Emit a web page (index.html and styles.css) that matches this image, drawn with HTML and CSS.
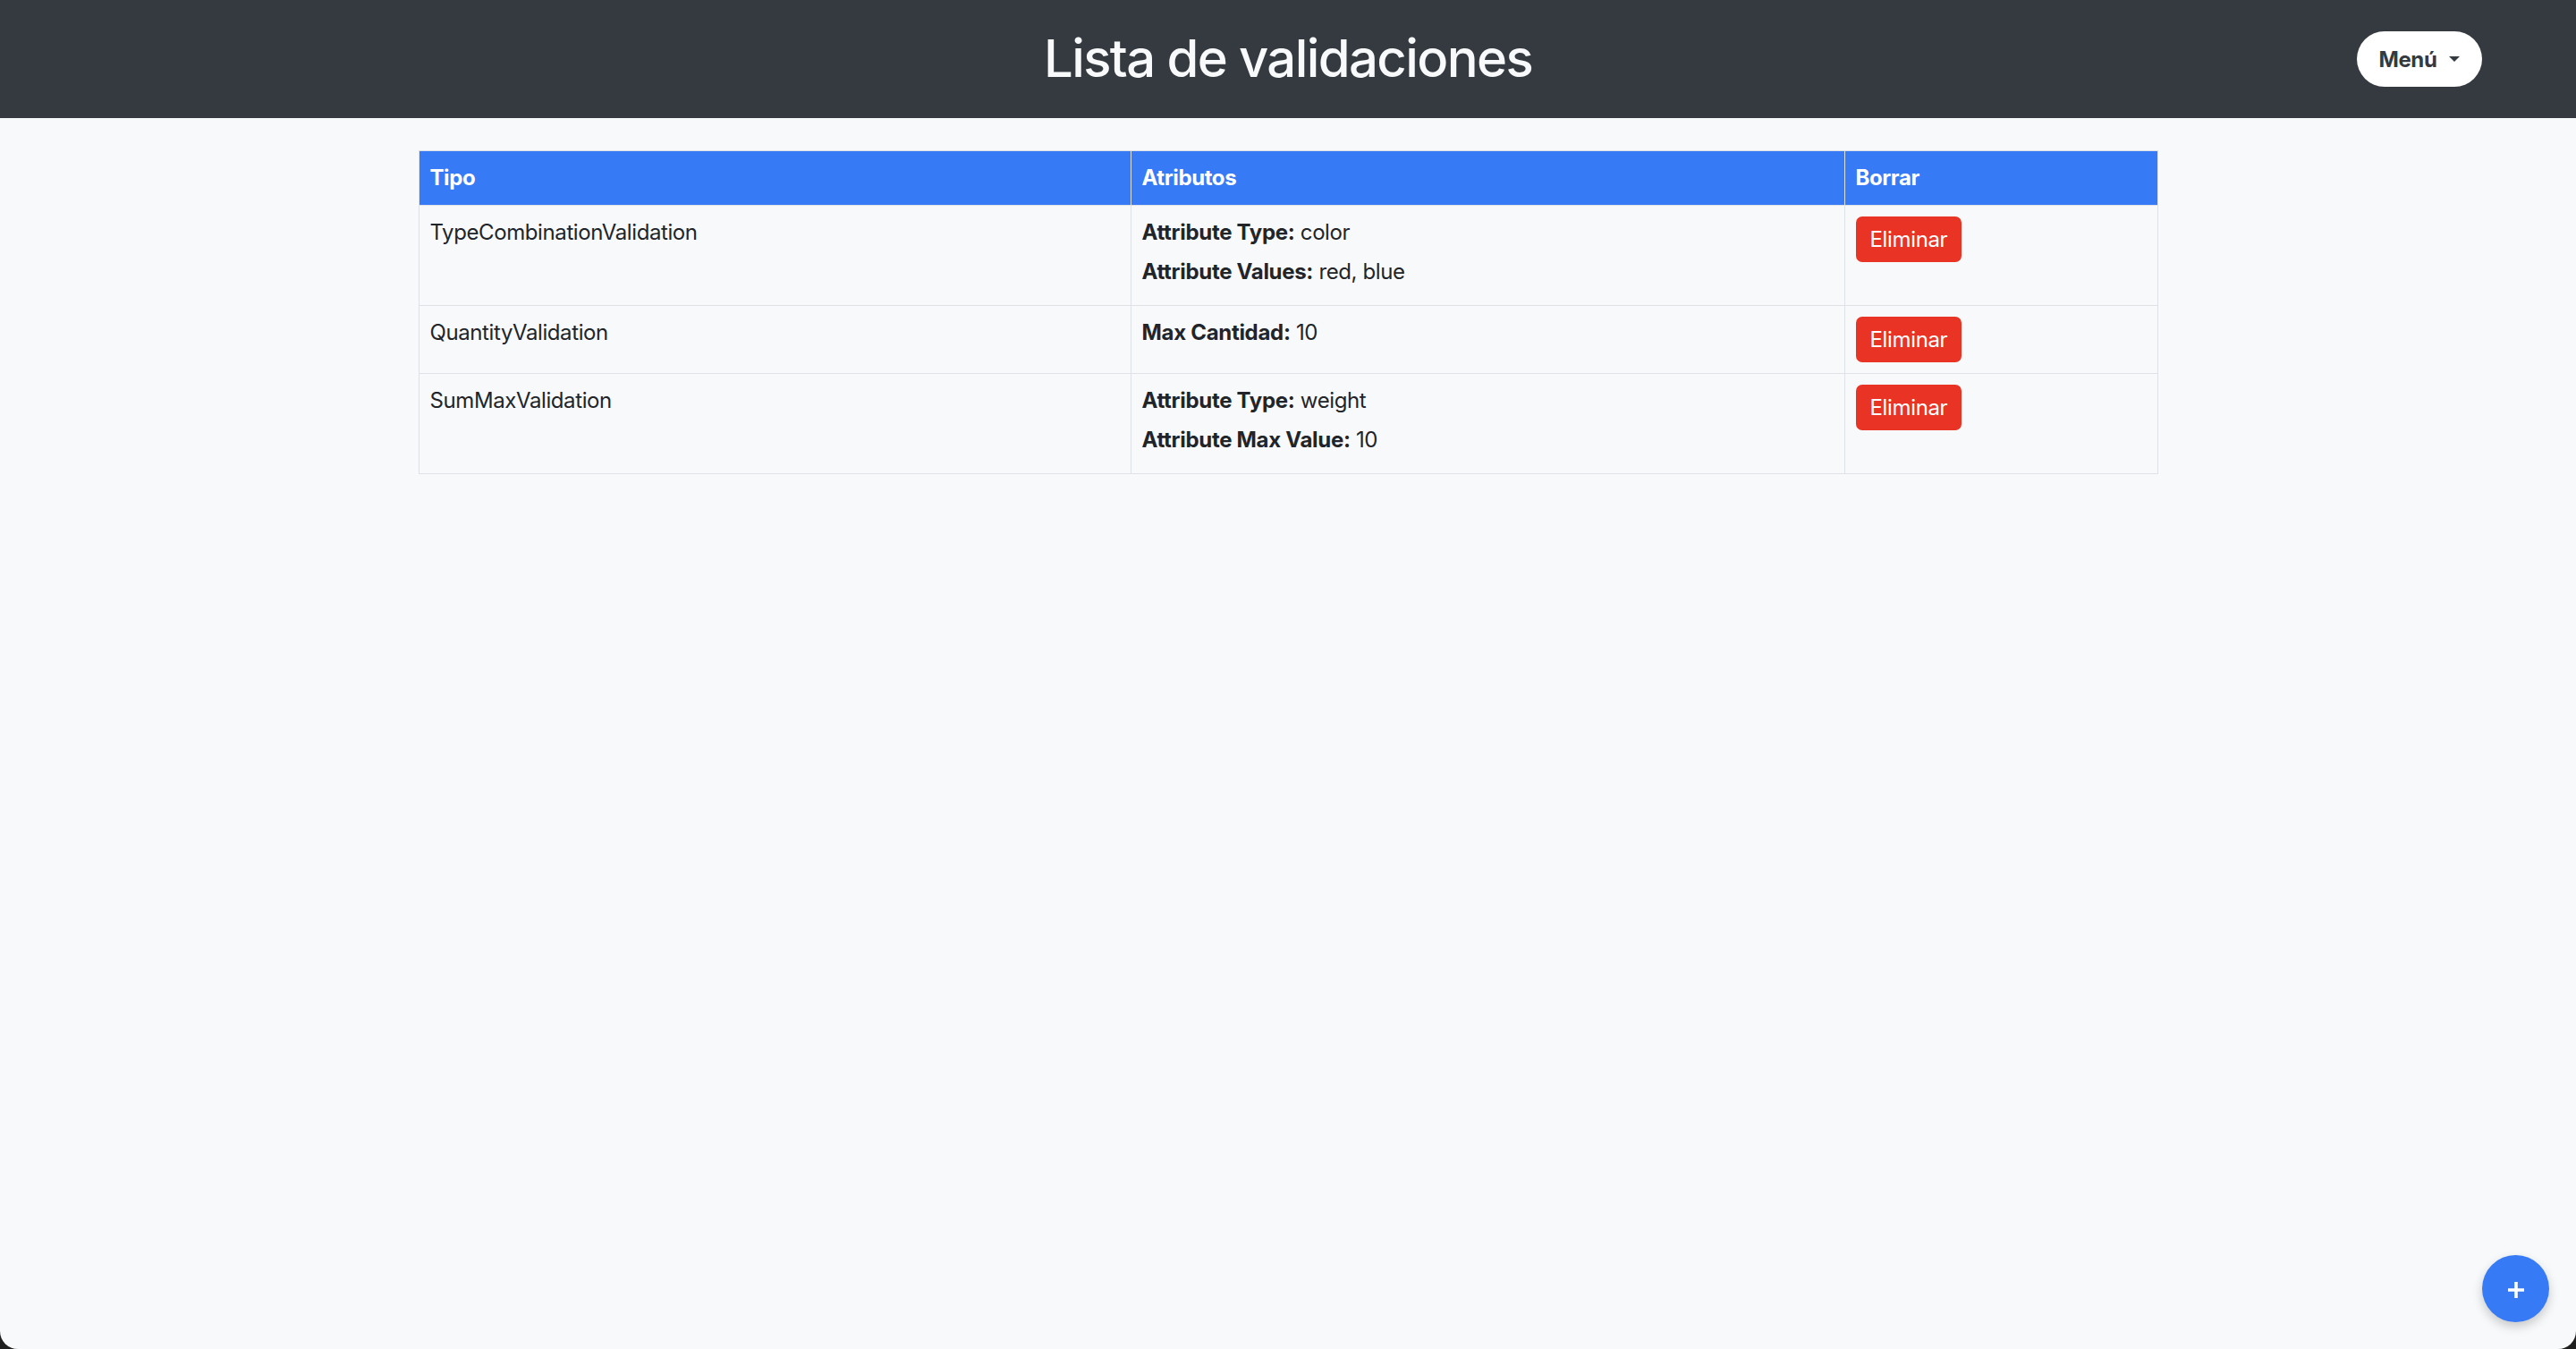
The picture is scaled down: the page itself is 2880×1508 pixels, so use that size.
FILE: index.html
```html
<!DOCTYPE html>
<html lang="es">
<head>
<meta charset="utf-8">
<title>Lista de validaciones</title>
<link rel="stylesheet" href="styles.css">
</head>
<body>
<div class="page">
  <header class="topbar">
    <div class="spacer"></div>
    <h1 class="title">Lista de validaciones</h1>
    <div class="menu-wrap">
      <button class="menu-btn" type="button">Menú <span class="caret"></span></button>
    </div>
  </header>

  <main class="content">
    <table class="vtable">
      <colgroup>
        <col class="c-tipo">
        <col class="c-attr">
        <col class="c-del">
      </colgroup>
      <thead>
        <tr>
          <th>Tipo</th>
          <th>Atributos</th>
          <th>Borrar</th>
        </tr>
      </thead>
      <tbody>
        <tr>
          <td>TypeCombinationValidation</td>
          <td>
            <p><strong>Attribute Type:</strong> color</p>
            <p><strong>Attribute Values:</strong> red, blue</p>
          </td>
          <td><button class="btn-del" type="button">Eliminar</button></td>
        </tr>
        <tr>
          <td>QuantityValidation</td>
          <td>
            <p><strong>Max Cantidad:</strong> 10</p>
          </td>
          <td><button class="btn-del" type="button">Eliminar</button></td>
        </tr>
        <tr>
          <td>SumMaxValidation</td>
          <td>
            <p><strong>Attribute Type:</strong> weight</p>
            <p><strong>Attribute Max Value:</strong> 10</p>
          </td>
          <td><button class="btn-del" type="button">Eliminar</button></td>
        </tr>
      </tbody>
    </table>
  </main>

  <button class="fab" type="button" aria-label="Añadir">
    <svg width="20" height="20" viewBox="0 0 20 20"><path d="M10 1v18M1 10h18" stroke="#fff" stroke-width="3.6" stroke-linecap="butt"/></svg>
  </button>
</div>
</body>
</html>
```

FILE: styles.css
```css
html {
  background: #1f1f1f;
}

body {
  margin: 0;
  font-family: Inter, "Noto Sans", "Liberation Sans", sans-serif;
  color: #212529;
  font-size: 24px;
  line-height: 36px;
}

.page {
  min-height: 1508px;
  background: #f8f9fa;
  border-radius: 0 0 20px 20px;
  overflow: hidden;
}

.topbar {
  height: 132px;
  background: #343a40;
  display: grid;
  grid-template-columns: 1fr auto 1fr;
  align-items: center;
}

.title {
  margin: 0;
  color: #f8f9fa;
  font-size: 58px;
  font-weight: 500;
  line-height: 1;
  letter-spacing: -1.6px;
  padding-bottom: 2px;
}

.menu-wrap {
  display: flex;
  justify-content: flex-end;
  padding-right: 105px;
}

.menu-btn {
  width: 140px;
  height: 62px;
  border: none;
  border-radius: 31px;
  background: #ffffff;
  color: #343a40;
  font-family: inherit;
  font-size: 24px;
  font-weight: 700;
  letter-spacing: -0.4px;
  display: flex;
  align-items: center;
  justify-content: center;
  gap: 14px;
  padding: 0;
}

.caret {
  width: 0;
  height: 0;
  border-left: 6px solid transparent;
  border-right: 6px solid transparent;
  border-top: 6px solid #343a40;
}

.content {
  padding-top: 36px;
  display: flex;
  justify-content: center;
}

.vtable {
  width: 1944px;
  border-collapse: collapse;
  table-layout: fixed;
  border: 1px solid #dee2e6;
}

.c-tipo { width: 796px; }
.c-attr { width: 798px; }
.c-del { width: 350px; }

.vtable th,
.vtable td {
  border: 1px solid #dee2e6;
  padding: 12px;
  text-align: left;
  vertical-align: top;
  letter-spacing: -0.4px;
}

.vtable th {
  background: #377af6;
  color: #ffffff;
  font-weight: 700;
}

.vtable td {
  background: #f8f9fa;
}

.vtable p {
  margin: 0 0 7.5px 0;
}

.vtable strong {
  font-weight: 700;
  letter-spacing: -0.3px;
}

.btn-del {
  display: block;
  height: 51px;
  padding: 0 16px;
  border: none;
  border-radius: 7px;
  background: #e93324;
  color: #ffffff;
  font-family: inherit;
  font-size: 24px;
  line-height: 36px;
  letter-spacing: -0.35px;
}

.fab {
  position: fixed;
  right: 30px;
  bottom: 30px;
  width: 75px;
  height: 75px;
  border: none;
  border-radius: 50%;
  background: #377af6;
  box-shadow: 0 5px 12px rgba(0, 0, 0, 0.2);
  display: flex;
  align-items: center;
  justify-content: center;
  padding: 3px 0 0 0;
}
```
